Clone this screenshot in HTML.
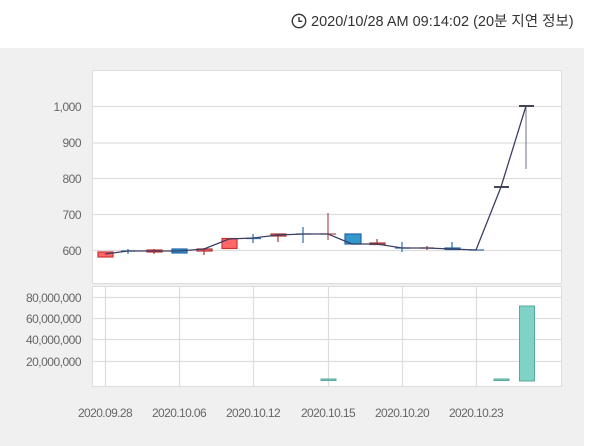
<!DOCTYPE html>
<html><head><meta charset="utf-8"><style>
body{margin:0;width:600px;height:446px;background:#fff;overflow:hidden;font-family:"Liberation Sans","Noto Sans CJK KR",sans-serif;}
.t{position:absolute;font-size:14.5px;color:#333;white-space:nowrap}
</style></head><body>
<div class="t" style="left:291px;top:10px;">
<svg width="16" height="16" viewBox="0 0 15 15" style="vertical-align:-3px"><circle cx="7.5" cy="7.5" r="6.3" fill="none" stroke="#333" stroke-width="1.3"/><path d="M7.5 3.8V7.8H10.5" fill="none" stroke="#333" stroke-width="1.3"/></svg> 2020/10/28 AM 09:14:02 (20분 지연 정보)</div>
<div style="position:absolute;left:0;top:48px;width:584px;height:398px;background:#f0f0f0"></div>
<svg width="600" height="446" style="position:absolute;left:0;top:0" font-family="Liberation Sans" font-size="12" fill="#666">
<rect x="92.5" y="70.5" width="469" height="213" fill="#fff" stroke="#ddd"/>
<rect x="92.5" y="286.5" width="469" height="100" fill="#fff" stroke="#ddd"/>
<g stroke="#ddd" stroke-width="1.2">
<path d="M93 106.5H561M93 143H561M93 178.5H561M93 214.5H561M93 250.5H561"/>
<path d="M93 297.5H561M93 318.5H561M93 339.5H561M93 361.5H561"/>
<path d="M105.5 287V386M179.5 287V386M253.5 287V386M328.5 287V386M402.5 287V386M476.5 287V386"/>
</g>
<g text-anchor="end" letter-spacing="-0.5">
<text x="81" y="111">1,000</text><text x="81" y="147">900</text><text x="81" y="183">800</text><text x="81" y="219">700</text><text x="81" y="255">600</text>
<text x="81" y="302">80,000,000</text><text x="81" y="323">60,000,000</text><text x="81" y="344">40,000,000</text><text x="81" y="366">20,000,000</text>
</g>
<g text-anchor="middle" letter-spacing="-0.6">
<text x="105" y="417">2020.09.28</text><text x="179" y="417">2020.10.06</text><text x="253" y="417">2020.10.12</text><text x="328" y="417">2020.10.15</text><text x="402" y="417">2020.10.20</text><text x="476" y="417">2020.10.23</text>
</g>
<g stroke-width="1.2">
<rect x="98" y="252" width="15" height="5" fill="#f66" stroke="#c33"/>
<path d="M121 251H135M128 249V254" stroke="#2a6fb0"/>
<rect x="147" y="250" width="15" height="2" fill="#f66" stroke="#c33"/><path d="M154 249V254" stroke="#a33"/>
<rect x="172" y="249" width="15" height="4" fill="#39c" stroke="#26a"/>
<rect x="197" y="249" width="15" height="2" fill="#f66" stroke="#a33"/><path d="M204 248V255" stroke="#a33"/>
<rect x="222" y="238.5" width="15" height="10" fill="#f66" stroke="#c33"/>
<path d="M246 238.5H261M253 234V243" stroke="#2a6fb0"/>
<rect x="271" y="234" width="15" height="2" fill="#f66" stroke="#a33"/><path d="M278 234V242" stroke="#a33"/>
<path d="M296 234H311M303 227V243" stroke="#2a6fb0"/>
<path d="M321 234H336M328 213V240" stroke="#a55"/>
<rect x="345" y="234" width="16" height="10" fill="#39c" stroke="#26a"/>
<rect x="370" y="243" width="15" height="1.5" fill="#f66" stroke="#a33"/><path d="M377 239V244" stroke="#a33"/>
<path d="M395 248H410M402 242V252" stroke="#2a6fb0"/>
<path d="M420 248H434M427 246V250" stroke="#a33"/>
<rect x="445" y="248" width="15" height="1.5" fill="#39c" stroke="#26a"/><path d="M452 242V249" stroke="#26a"/>
<path d="M469 250H484" stroke="#2a6fb0"/>
<path d="M494 187H509" stroke="#445" stroke-width="2"/>
<path d="M519 106H534" stroke="#445" stroke-width="2"/><path d="M526 106V169" stroke="#889"/>
</g>
<path d="M105 254L128 251L154 251L179 251L204 249L229 239L253 238L278 235L303 234L328 234L352 244L377 244L402 248L427 248L452 249L476 250L501 187L526 106" fill="none" stroke="#3b3f63" stroke-width="1.3"/>
<g fill="#7fd3c6" stroke="#5aa99c">
<rect x="321" y="379" width="15" height="1.5"/>
<rect x="494" y="379" width="15" height="1.5"/>
<rect x="519.5" y="306" width="15" height="75"/>
</g>
</svg>
</body></html>
